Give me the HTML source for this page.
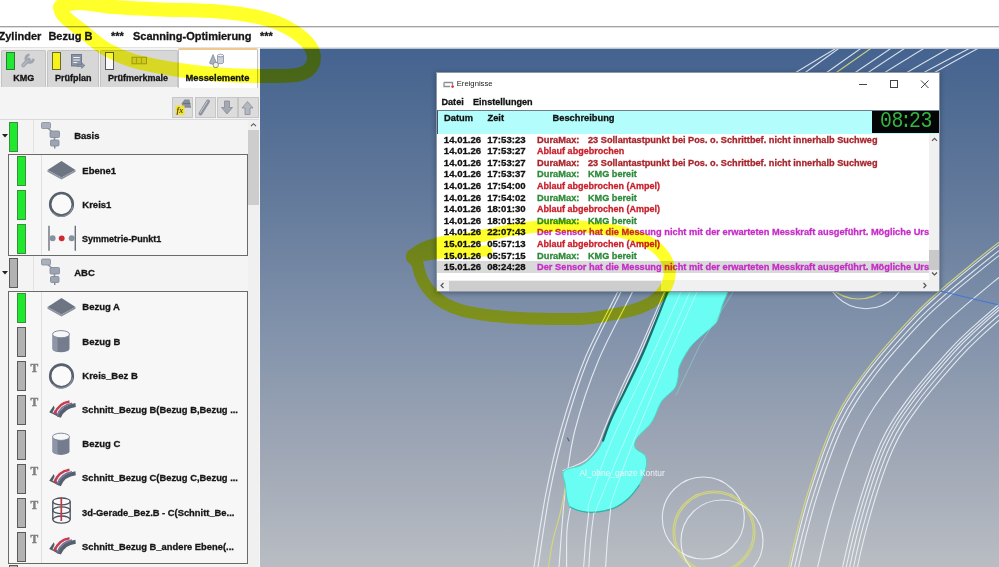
<!DOCTYPE html><html lang="de"><head><meta charset="utf-8"><title>Ereignisse</title><style>
*{box-sizing:border-box;margin:0;padding:0}
html,body{width:999px;height:567px;overflow:hidden;background:#fff}
body{position:relative;font-family:"Liberation Sans",sans-serif;color:#111}
.abs{position:absolute}
.t,.tl,.rt,.er{-webkit-text-stroke:0.3px currentColor}
.t{position:absolute;white-space:pre;font-weight:bold;line-height:1;transform-origin:0 0}
#topline{left:0;top:26px;width:999px;height:2px;background:linear-gradient(#a2a2a2 0,#a2a2a2 50%,#dedede 50%,#dedede 100%)}
#topline2{left:0;top:47px;width:999px;height:1px;background:#e3e3e3}
#panel{left:0;top:48px;width:260px;height:519px;background:#f4f4f4}
.tab{position:absolute;top:2px;height:37px;background:#d7d7d7;border:1px solid #c4c4c4;border-bottom:none;border-radius:2px 2px 0 0}
.tab.act{background:#fff;border-top:2px solid #f2c98c;top:0;height:40px}
.ind{position:absolute;width:9px;height:18px;border:1px solid #555}
.tl{position:absolute;font-weight:bold;font-size:9px;line-height:1;white-space:pre;color:#151515}
.btn{position:absolute;top:49px;height:21px;background:#dcdcdc;border:1px solid #c6c6c6}
#vp{left:260px;top:49px;width:739px;height:518px;border-top:0 solid #000;background:linear-gradient(rgb(68,99,143) 0%,rgb(97,120,154) 27%,rgb(128,145,170) 53%,rgb(160,168,182) 79%,rgb(185,189,195) 100%);overflow:hidden}
.bar{position:absolute;width:9px;height:30px;border:1px solid #4a4a4a}
.g{background:#1fe82f;border-color:#3b8f3b}
.gr{background:#b2b2b2;border-color:#5a5a5a}
.box{position:absolute;left:8px;width:240px;border:1px solid #6a6a6a;background:#f7f7f7}
.rt{position:absolute;font-weight:bold;font-size:9.5px;line-height:1;white-space:pre;color:#161616}
.tm{position:absolute;font-family:"Liberation Serif",serif;font-weight:bold;font-size:11.5px;line-height:1;color:#808080;-webkit-text-stroke:0.5px #808080}
#win{left:436px;top:72px;width:504px;height:220px;background:#fff;border:1px solid #8d98a8;overflow:hidden;box-shadow:0 1px 5px rgba(20,30,50,.45)}
.er{position:absolute;left:0;height:11.6px;width:492px;white-space:pre;font-weight:bold;font-size:9.6px;line-height:11.6px}
.er span{position:absolute;top:0;transform-origin:0 0}
.red{color:#a8242c}.red2{color:#c8202c}.grn{color:#2d8a3a}.mag{color:#c62cc8}
</style></head><body>
<div class="abs" id="topline"></div><div class="abs" id="topline2"></div><div class="abs" style="left:260px;top:48px;width:739px;height:1px;background:#b9c4d6"></div>
<div class="t" style="left:-1.5px;top:31px;font-size:11px;color:#151515;">Zylinder</div>
<div class="t" style="left:48.4px;top:31px;font-size:11px;color:#151515;">Bezug B</div>
<div class="t" style="left:111px;top:31px;font-size:11px;color:#151515;">***</div>
<div class="t" style="left:133px;top:31px;font-size:11px;color:#151515;">Scanning-Optimierung</div>
<div class="t" style="left:260px;top:31px;font-size:11px;color:#151515;">***</div>
<div class="abs" id="vp"><svg class="abs" style="left:0;top:0" width="739" height="518" viewBox="260 49 739 518" fill="none" stroke-linecap="round"><path d="M840.0 46 Q818.7 58.5 793.3 74" stroke="#eef2f8" stroke-width="1.1" stroke-opacity="0.88"/><path d="M842.2 46 Q823.3 59.5 800.4 76" stroke="#eef2f8" stroke-width="1.1" stroke-opacity="0.88"/><path d="M864.2 46 Q845.0 59.5 821.8 76" stroke="#eef2f8" stroke-width="1.1" stroke-opacity="0.88"/><path d="M874.3 46 Q854.8 59.5 831.3 76" stroke="#d6d878" stroke-width="1.2" stroke-opacity="0.9"/><path d="M894.4 46 Q874.3 59.5 850.1 76" stroke="#eef2f8" stroke-width="1.1" stroke-opacity="0.88"/><path d="M908.3 46 Q887.6 59.5 862.9 76" stroke="#eef2f8" stroke-width="1.1" stroke-opacity="0.88"/><path d="M927.9 46 Q905.6 59.5 879.3 76" stroke="#eef2f8" stroke-width="1.1" stroke-opacity="0.88"/><path d="M953.2 46 Q929.1 59.5 901.0 76" stroke="#eef2f8" stroke-width="1.1" stroke-opacity="0.88"/><path d="M974.1 46 Q947.8 59.5 917.5 76" stroke="#eef2f8" stroke-width="1.1" stroke-opacity="0.88"/><path d="M982.4 46 Q957.4 59.5 928.4 76" stroke="#eef2f8" stroke-width="1.1" stroke-opacity="0.88"/><path d="M784.0 600.0C784.8 594.5 784.8 584.8 788.7 567.0C792.6 549.2 799.9 518.0 807.6 493.5C815.3 469.0 824.7 440.9 834.8 420.0C844.9 399.1 855.0 385.3 868.0 368.0C881.0 350.7 900.3 329.6 912.7 316.4C925.1 303.2 931.8 297.9 942.3 288.6C952.8 279.3 965.6 269.1 975.7 260.8C985.8 252.5 998.5 242.6 1003.0 239.0" stroke="#d6d878" stroke-width="1.2" stroke-opacity="0.9"/><path d="M786.0 600.3C786.8 594.8 786.7 585.1 790.7 567.4C794.6 549.7 801.9 518.5 809.5 494.1C817.2 469.7 826.6 441.7 836.6 420.9C846.7 400.1 856.7 386.4 869.6 369.2C882.6 352.1 901.9 331.0 914.2 317.8C926.5 304.6 933.2 299.4 943.7 290.2C954.1 280.9 966.9 270.7 977.0 262.4C987.1 254.2 999.8 244.3 1004.3 240.6" stroke="#eef2f8" stroke-width="1.1" stroke-opacity="0.88"/><path d="M789.6 600.8C790.4 595.4 790.4 585.8 794.4 568.3C798.3 550.7 805.6 519.6 813.3 495.3C820.9 471.0 830.3 443.2 840.3 422.6C850.2 402.0 860.1 388.7 873.0 371.7C885.8 354.7 905.0 333.8 917.3 320.7C929.6 307.7 936.1 302.6 946.6 293.4C957.0 284.3 969.8 274.1 979.9 265.9C990.0 257.7 1002.6 247.8 1007.2 244.2" stroke="#eef2f8" stroke-width="1.1" stroke-opacity="0.88"/><path d="M793.4 601.3C794.2 596.0 794.2 586.6 798.1 569.1C802.0 551.6 809.3 520.6 816.9 496.4C824.5 472.3 833.9 444.7 843.7 424.3C853.6 403.9 863.3 390.9 876.0 374.0C888.8 357.2 908.0 336.3 920.1 323.4C932.3 310.4 938.8 305.4 949.1 296.3C959.5 287.3 972.2 277.1 982.3 268.9C992.4 260.7 1005.1 250.9 1009.6 247.3" stroke="#eef2f8" stroke-width="1.1" stroke-opacity="0.88"/><path d="M812.1 604.0C812.8 598.9 812.6 590.1 816.3 573.1C820.1 556.1 827.2 525.4 834.5 501.9C841.8 478.4 850.8 451.7 860.1 432.2C869.4 412.7 878.2 400.9 890.4 384.8C902.5 368.7 921.4 348.0 933.1 335.5C944.8 322.9 950.7 318.3 960.7 309.4C970.7 300.6 983.3 290.4 993.2 282.2C1003.1 274.1 1015.7 264.2 1020.2 260.6" stroke="#eef2f8" stroke-width="1.1" stroke-opacity="0.88"/><path d="M837.0 607.5C837.5 602.7 836.8 594.8 840.2 578.4C843.6 562.0 850.4 531.8 857.2 509.1C864.0 486.4 872.4 460.7 880.9 442.2C889.5 423.8 897.0 413.6 908.3 398.3C919.7 383.0 937.9 362.5 949.0 350.3C960.0 338.2 965.1 334.0 974.7 325.3C984.2 316.6 996.5 306.3 1006.2 298.1C1015.8 289.9 1028.2 279.7 1032.6 276.0" stroke="#eef2f8" stroke-width="1.1" stroke-opacity="0.88"/><path d="M840.7 608.1C841.2 603.3 840.4 595.5 843.7 579.2C847.0 562.8 853.7 532.7 860.4 510.1C867.1 487.5 875.4 461.9 883.8 443.6C892.2 425.3 899.5 415.3 910.7 400.1C921.9 384.9 940.0 364.4 951.0 352.2C961.9 340.1 966.9 335.9 976.3 327.2C985.8 318.5 998.0 308.1 1007.6 299.9C1017.2 291.6 1029.5 281.4 1033.9 277.7" stroke="#eef2f8" stroke-width="1.1" stroke-opacity="0.88"/><path d="M844.4 608.6C844.8 603.8 843.9 596.2 847.1 579.9C850.3 563.7 856.9 533.5 863.5 511.0C870.1 488.5 878.3 463.1 886.5 444.9C894.7 426.7 901.8 416.9 912.9 401.7C923.9 386.6 942.0 366.1 952.8 353.9C963.6 341.8 968.5 337.6 977.8 328.9C987.2 320.1 999.4 309.8 1008.9 301.5C1018.5 293.2 1030.7 282.8 1035.0 279.1" stroke="#eef2f8" stroke-width="1.1" stroke-opacity="0.88"/><path d="M848.2 609.1C848.6 604.4 847.6 596.9 850.8 580.8C853.9 564.6 860.6 534.5 867.1 512.2C873.6 489.8 881.7 464.5 889.9 446.5C898.0 428.5 904.9 419.0 915.9 404.0C926.8 389.0 944.8 368.5 955.5 356.5C966.3 344.4 971.0 340.4 980.3 331.7C989.6 323.0 1001.8 312.6 1011.3 304.3C1020.8 296.1 1033.0 285.7 1037.3 282.0" stroke="#eef2f8" stroke-width="1.1" stroke-opacity="0.88"/><path d="M851.9 609.7C852.3 605.0 851.4 597.6 854.5 581.6C857.6 565.5 864.3 535.5 870.8 513.3C877.2 491.1 885.3 466.0 893.4 448.2C901.4 430.4 908.2 421.2 919.0 406.3C929.8 391.5 947.8 371.1 958.4 359.2C969.1 347.2 973.7 343.3 982.9 334.6C992.2 326.0 1004.3 315.7 1013.8 307.4C1023.3 299.2 1035.5 288.8 1039.8 285.1" stroke="#eef2f8" stroke-width="1.1" stroke-opacity="0.88"/><path d="M941 291.3L1000 305.2" stroke="#3f78d8" stroke-width="1.1"/><circle cx="866" cy="267.6" r="41.2" stroke="#eef2f8" stroke-width="1.1" stroke-opacity="0.88"/><circle cx="858.5" cy="259" r="40" stroke="#d6d878" stroke-width="1.2" stroke-opacity="0.9"/><circle cx="703.3" cy="518" r="41" stroke="#eef2f8" stroke-width="1.1" stroke-opacity="0.88"/><circle cx="714" cy="532" r="41" stroke="#d6d878" stroke-width="1.2" stroke-opacity="0.9"/><circle cx="714" cy="532" r="39.3" stroke="#d6d878" stroke-width="1.2" stroke-opacity="0.9"/><circle cx="722" cy="541" r="41" stroke="#eef2f8" stroke-width="1.1" stroke-opacity="0.88"/><path d="M622.0 280.0C621.3 282.0 623.8 278.8 617.6 292.0C611.4 305.2 594.2 336.0 584.7 359.0C575.2 382.0 567.2 407.7 560.8 430.0C554.3 452.3 550.5 470.2 546.0 493.0C541.5 515.8 536.2 553.3 534.0 567.0C531.8 580.7 533.2 573.7 533.0 575.0" stroke="#eef2f8" stroke-width="1.1" stroke-opacity="0.88"/><path d="M625.0 280.0C624.3 282.0 626.9 278.8 620.8 292.0C614.7 305.2 597.6 336.0 588.2 359.0C578.8 382.0 570.9 407.7 564.5 430.0C558.1 452.3 554.1 470.2 549.7 493.0C545.3 515.8 540.1 553.3 538.0 567.0C535.9 580.7 537.2 573.7 537.0 575.0" stroke="#eef2f8" stroke-width="1.1" stroke-opacity="0.88"/><path d="M636.5 280.0C635.8 282.0 638.6 278.8 632.4 292.0C626.1 305.2 608.6 336.0 599.0 359.0C589.4 382.0 580.7 407.7 575.0 430.0C569.3 452.3 567.7 470.2 565.0 493.0C562.3 515.8 560.1 553.3 559.0 567.0C557.9 580.7 558.6 573.7 558.5 575.0" stroke="#eef2f8" stroke-width="1.1" stroke-opacity="0.88"/><path d="M670.0 280.0C669.1 282.0 669.8 280.0 664.5 292.0C659.2 304.0 645.8 335.8 638.5 352.0C631.2 368.2 626.8 376.0 621.0 389.0C615.2 402.0 608.0 420.3 604.0 430.0C600.0 439.7 600.0 442.0 597.0 447.0C594.0 452.0 590.2 456.7 586.0 460.0C581.8 463.3 575.8 465.2 572.0 467.0C568.2 468.8 564.5 469.9 563.0 470.5" stroke="#eef2f8" stroke-width="1.1" stroke-opacity="0.88"/><path d="M673.0 280.0C672.0 282.0 672.3 280.0 667.0 292.0C661.7 304.0 648.2 335.8 641.0 352.0C633.8 368.2 629.6 376.0 624.0 389.0C618.4 402.0 611.5 420.2 607.5 430.0C603.5 439.8 603.2 442.7 600.0 448.0C596.8 453.3 592.5 458.4 588.0 462.0C583.5 465.6 577.2 467.7 573.0 469.5C568.8 471.3 564.7 472.4 563.0 473.0" stroke="#eef2f8" stroke-width="1.1" stroke-opacity="0.88"/><path d="M563.5 472.0C563.9 473.3 566.4 473.7 566.0 480.0C565.6 486.3 563.2 500.0 561.0 510.0C558.8 520.0 555.1 530.5 553.0 540.0C550.9 549.5 549.3 561.2 548.5 567.0C547.7 572.8 548.1 573.7 548.0 575.0" stroke="#d6d878" stroke-width="1.2" stroke-opacity="0.9"/><path d="M571.0 505.0C570.3 509.2 567.7 519.7 567.0 530.0C566.3 540.3 566.7 559.5 566.6 567.0C566.5 574.5 566.5 573.7 566.5 575.0" stroke="#eef2f8" stroke-width="1.1" stroke-opacity="0.88"/><path d="M668.0 288.0C666.7 291.7 664.1 299.4 660.0 310.0C655.9 320.6 649.2 338.7 643.5 351.8C637.8 364.9 631.5 377.4 626.0 388.8C620.5 400.2 614.5 411.4 610.7 420.0C606.9 428.6 605.6 435.1 603.0 440.7C600.4 446.3 598.5 449.6 595.0 453.7C591.5 457.8 587.2 462.1 582.0 465.0C576.8 467.9 566.8 467.7 564.0 471.0C561.2 474.3 564.6 479.5 565.3 484.8C566.0 490.1 566.5 498.9 568.0 503.0C569.5 507.1 570.3 507.9 574.4 509.4C578.5 510.9 586.1 512.2 592.6 512.0C599.1 511.8 607.3 510.4 613.3 508.0C619.3 505.6 624.5 501.6 628.8 497.7C633.1 493.8 636.4 489.6 639.2 484.8C642.0 480.0 644.7 473.8 645.7 469.0C646.8 464.2 647.2 459.5 645.5 456.0C643.8 452.5 636.7 451.0 635.3 448.0C633.9 445.0 634.6 441.8 637.0 438.0C639.4 434.2 646.6 428.7 649.6 425.0C652.6 421.3 653.0 420.0 655.0 416.0C657.0 412.0 658.6 405.6 661.9 401.0C665.1 396.4 671.8 392.5 674.5 388.7C677.2 384.9 677.1 381.8 678.0 378.0C678.9 374.2 677.6 371.0 679.6 366.0C681.6 361.0 686.0 353.1 689.7 348.0C693.4 342.9 698.3 339.1 702.0 335.6C705.7 332.1 709.4 329.5 712.0 327.0C714.6 324.5 715.8 324.2 717.5 320.5C719.2 316.8 720.8 309.6 722.5 305.0C724.2 300.4 726.5 295.8 727.6 292.6C728.7 289.4 728.8 287.1 729.0 286.0Z" fill="#6afdf3" stroke="#49d6c4" stroke-width="1"/><path d="M667.5 292.0C663.5 302.0 650.4 335.7 643.5 351.8C636.6 367.9 631.5 377.4 626.0 388.8C620.5 400.2 614.5 411.4 610.7 420.0C606.9 428.6 604.3 437.2 603.0 440.7" stroke="#0f5a5a" stroke-width="2.2" stroke-opacity="0.85"/><path d="M570.0 507.0C571.7 507.7 576.2 510.1 580.0 511.0C583.8 511.9 587.1 512.9 592.6 512.5C598.1 512.1 607.3 510.9 613.3 508.5C619.3 506.1 624.5 502.1 628.8 498.2C633.1 494.3 637.5 487.4 639.2 485.3" stroke="#2aa89c" stroke-width="1.2" stroke-opacity="0.8"/><path d="M690.0 292.0C685.0 303.3 670.8 335.3 660.0 360.0C649.2 384.7 635.0 416.7 625.0 440.0C615.0 463.3 605.0 487.8 600.0 500.0C595.0 512.2 595.8 510.8 595.0 513.0" stroke="#e8ffff" stroke-width="1" stroke-opacity="0.55"/><path d="M697.0 292.0C692.0 303.3 677.5 335.3 667.0 360.0C656.5 384.7 643.2 416.7 634.0 440.0C624.8 463.3 615.9 488.5 612.0 500.0C608.1 511.5 610.9 507.5 610.7 509.0" stroke="#e8ffff" stroke-width="1" stroke-opacity="0.55"/><path d="M681.0 292.0C675.8 303.3 661.5 335.3 650.0 360.0C638.5 384.7 622.0 416.7 612.0 440.0C602.0 463.3 593.9 487.8 590.0 500.0C586.1 512.2 588.9 510.8 588.7 513.0" stroke="#e8ffff" stroke-width="1" stroke-opacity="0.55"/><path d="M588.7 513Q585 540 583.5 570" stroke="#eef2f8" stroke-width="1.1" stroke-opacity="0.88"/><path d="M593.8 513Q590 540 588.7 570" stroke="#eef2f8" stroke-width="1.1" stroke-opacity="0.88"/><path d="M610.7 509Q606.5 540 605.5 570" stroke="#eef2f8" stroke-width="1.1" stroke-opacity="0.88"/><path d="M733 292L700 345L676 395" stroke="#7fded8" stroke-width="0.8" stroke-opacity="0.7"/><path d="M567.5 438l1.5 3" stroke="#3a4a7a" stroke-width="1"/></svg><div class="abs" style="left:319.5px;top:419.5px;font-size:8.4px;line-height:1;color:#f4f6fa;white-space:pre;opacity:.92">Al_ohne_ganze Kontur</div></div>
<div class="abs" id="panel">
<div class="tab" style="left:1px;width:45px"></div>
<div class="tab" style="left:47px;width:52px"></div>
<div class="tab" style="left:100px;width:78px"></div>
<div class="tab act" style="left:178px;width:80px"></div>
<div class="ind" style="left:6px;top:4px;background:#22e833;border-color:#2f7a33"></div>
<div class="ind" style="left:52px;top:4px;background:#f7f21a;border-color:#6a6a2a"></div>
<div class="ind" style="left:105px;top:4px;background:#fafafa;border-color:#5a5a5a"></div>
<div class="tl" style="left:13.3px;top:25.5px">KMG</div>
<div class="tl" style="left:55px;top:25.5px">Prüfplan</div>
<div class="tl" style="left:108px;top:25.5px">Prüfmerkmale</div>
<div class="tl" style="left:185.5px;top:25.5px;font-size:9.35px">Messelemente</div>
<svg class="abs" style="left:0;top:0" width="259" height="42" viewBox="0 48 259 42" fill="none"><g stroke="#a0a6b1" stroke-linecap="round"><path d="M23.200 65.300L28.800 59.700" stroke-width="4"/><path d="M28.300 55A3.800 3.800 0 1 0 33.200 59.900" stroke-width="2.900"/></g><path d="M22.3 66.2L28.3 60.2" stroke="#c4c9d1" stroke-width="1"/><rect x="71.500" y="54.500" width="10" height="11.500" fill="#8a93a6" stroke="#707a8e" stroke-width="1"/><path d="M73.300 57.500h6.500M73.300 60h6.500M73.300 62.500h4" stroke="#eef0f4" stroke-width="1.100"/><path d="M77 64.500h4.500v-2l3.500 3l-3.500 3v-2h-4.500z" fill="#8a92a6" stroke="#6a7386" stroke-width="0.5"/><rect x="132" y="57.200" width="14.500" height="6.600" fill="#cfc98c" stroke="#98936c" stroke-width="0.900"/><path d="M136.5 57.500v6M141.5 57.500v6" stroke="#9a956e" stroke-width="0.8"/><path d="M209.500 63l3.500-8.500l3.500 8.500a3.500 1.200 0 0 1-7 0z" fill="#a9b0bd" stroke="#7a8292" stroke-width="0.7"/><path d="M217.500 55.500v7a3 1.200 0 0 0 6 0v-7" fill="#c9ced8" stroke="#7a8292" stroke-width="0.7"/><ellipse cx="220.500" cy="55.500" rx="3" ry="1.300" fill="#f2f4f7" stroke="#7a8292" stroke-width="0.7"/><circle cx="215.800" cy="65" r="2.700" fill="#eef0f4" stroke="#7a8292" stroke-width="0.8"/></svg>
<div class="btn" style="left:172px;width:21px"></div>
<div class="btn" style="left:195px;width:21px"></div>
<div class="btn" style="left:217px;width:21px"></div>
<div class="btn" style="left:237.5px;width:21px"></div>
<svg class="abs" style="left:170px;top:48px" width="89" height="24" viewBox="170 96 89 24" fill="none"><path d="M181.500 103.500l3-4h5l1.700 8.300h-8.200z" fill="#858c9a"/><path d="M183 103.500h7.300" stroke="#6a717f" stroke-width="1"/><rect x="175.500" y="105.500" width="9" height="9.500" fill="#f0e23a"/><path d="M200.500 113.500L208 101.500" stroke="#8d939e" stroke-width="3.900" stroke-linecap="round"/><path d="M200 113L207.500 101" stroke="#c5c9d0" stroke-width="1"/><path d="M224.500 101h5v6.500h3l-5.500 6.500l-5.500-6.500h3z" fill="#a3a8b1" stroke="#868c97" stroke-width="0.8"/><path d="M245 114.500h5v-6.500h3l-5.500-6.500l-5.500 6.500h3z" fill="#b4b9c1" stroke="#868c97" stroke-width="0.8"/></svg><div class="abs" style="left:176.500px;top:58.500px;font:italic bold 8px 'Liberation Serif',serif;line-height:1;color:#5a4a10">fx</div>
<div class="abs" style="left:0;top:70.5px;width:259px;height:1px;background:#dadada"></div>
<div class="abs" style="left:248px;top:72px;width:11px;height:447px;background:#f0f0f0"></div>
<div class="abs" style="left:248px;top:82px;width:11px;height:75px;background:#cdcdcd"></div>
<svg class="abs" style="left:248px;top:72px" width="11" height="10"><path d="M3 6.200L5.500 3.700L8 6.200" fill="none" stroke="#555" stroke-width="1.050"/></svg>
<div class="abs" style="left:33px;top:72px;width:1px;height:33px;background:#e2e2e2"></div>
<div class="bar g" style="left:9px;top:73.5px"></div>
<svg class="abs" style="left:2px;top:86.0px" width="6" height="4"><path d="M0 0H6L3 3.5Z" fill="#222"/></svg>
<div class="rt" style="left:74.2px;top:83.0px">Basis</div>
<div class="box" style="top:105.5px;height:102.5px"><div class="abs" style="left:32px;top:0;width:1px;height:100%;background:#e0e0e0"></div></div>
<div class="bar g" style="left:17px;top:108.0px"></div>
<div class="rt" style="left:82.3px;top:117.5px">Ebene1</div>
<div class="bar g" style="left:17px;top:142.2px"></div>
<div class="rt" style="left:82.3px;top:151.7px">Kreis1</div>
<div class="bar g" style="left:17px;top:176.4px"></div>
<div class="rt" style="left:82.3px;top:185.9px;transform:scaleX(0.95);transform-origin:0 0">Symmetrie-Punkt1</div>
<div class="abs" style="left:33px;top:208px;width:1px;height:34px;background:#e2e2e2"></div>
<div class="bar gr" style="left:9px;top:210.0px"></div>
<svg class="abs" style="left:2px;top:222.5px" width="6" height="4"><path d="M0 0H6L3 3.5Z" fill="#222"/></svg>
<div class="rt" style="left:74.2px;top:219.5px">ABC</div>
<div class="box" style="top:242.5px;height:273px"><div class="abs" style="left:32px;top:0;width:1px;height:100%;background:#e0e0e0"></div></div>
<div class="bar g" style="left:17px;top:244.8px"></div>
<div class="rt" style="left:82.3px;top:254.3px">Bezug A</div>
<div class="bar gr" style="left:17px;top:279.0px"></div>
<div class="rt" style="left:82.3px;top:288.5px">Bezug B</div>
<div class="bar gr" style="left:17px;top:313.2px"></div>
<div class="rt" style="left:82.3px;top:322.7px">Kreis_Bez B</div>
<div class="tm" style="left:30.5px;top:315.2px">T</div>
<div class="bar gr" style="left:17px;top:347.4px"></div>
<div class="rt" style="left:82.3px;top:356.9px;transform:scaleX(0.985);transform-origin:0 0">Schnitt_Bezug B(Bezug B,Bezug ...</div>
<div class="tm" style="left:30.5px;top:349.4px">T</div>
<div class="bar gr" style="left:17px;top:381.6px"></div>
<div class="rt" style="left:82.3px;top:391.1px">Bezug C</div>
<div class="bar gr" style="left:17px;top:415.8px"></div>
<div class="rt" style="left:82.3px;top:425.3px;transform:scaleX(0.985);transform-origin:0 0">Schnitt_Bezug C(Bezug C,Bezug ...</div>
<div class="tm" style="left:30.5px;top:417.8px">T</div>
<div class="bar gr" style="left:17px;top:450.0px"></div>
<div class="rt" style="left:82.3px;top:459.5px;transform:scaleX(0.985);transform-origin:0 0">3d-Gerade_Bez.B - C(Schnitt_Be...</div>
<div class="tm" style="left:30.5px;top:452.0px">T</div>
<div class="bar gr" style="left:17px;top:484.2px"></div>
<div class="rt" style="left:82.3px;top:493.7px;transform:scaleX(0.985);transform-origin:0 0">Schnitt_Bezug B_andere Ebene(...</div>
<div class="tm" style="left:30.5px;top:486.2px">T</div>
<div class="bar gr" style="left:9px;top:517.0px"></div>
<svg class="abs" style="left:0;top:72px" width="248" height="447" viewBox="0 120 248 447" fill="none"><g transform="translate(41 122)"><path d="M5 4.500L13 11.500M13.500 13v9" stroke="#8d94a2" stroke-width="1.600"/><rect x="0.500" y="0.500" width="9" height="6" rx="1" fill="#aab0bc" stroke="#858c9a" stroke-width="0.800"/><rect x="9" y="9" width="9.500" height="6.500" rx="1" fill="#9ea5b2" stroke="#7f8694" stroke-width="0.800"/><rect x="9.500" y="18" width="8.500" height="6" rx="1" fill="#9ea5b2" stroke="#7f8694" stroke-width="0.800"/><path d="M13.700 24v2.500" stroke="#7f8694" stroke-width="1.400"/></g><g transform="translate(41 258.5)"><path d="M5 4.500L13 11.500M13.500 13v9" stroke="#8d94a2" stroke-width="1.600"/><rect x="0.500" y="0.500" width="9" height="6" rx="1" fill="#aab0bc" stroke="#858c9a" stroke-width="0.800"/><rect x="9" y="9" width="9.500" height="6.500" rx="1" fill="#9ea5b2" stroke="#7f8694" stroke-width="0.800"/><rect x="9.500" y="18" width="8.500" height="6" rx="1" fill="#9ea5b2" stroke="#7f8694" stroke-width="0.800"/><path d="M13.700 24v2.500" stroke="#7f8694" stroke-width="1.400"/></g><g transform="translate(0 169.5)"><path d="M47.500 0.500L61.500 -8.500L75.500 0.500L61.500 8z" fill="#6d7482"/><path d="M47.500 0.500L61.500 8L75.500 0.500V2.300L61.500 10L47.500 2.300z" fill="#8b92a0"/></g><circle cx="61.500" cy="204.3" r="11.300" stroke="#59606d" stroke-width="2.600" fill="#fafafa"/><path d="M53 212.8A11.300 11.300 0 0 0 72.500 206.3" stroke="#8a919e" stroke-width="1.200"/><g transform="translate(0 238.3)"><path d="M49 -12.500v25M75.300 -12.500v25" stroke="#6a717e" stroke-width="1.400"/><circle cx="52.600" cy="0" r="3" fill="#8a919e"/><circle cx="71.700" cy="0" r="3" fill="#8a919e"/><circle cx="61.700" cy="0" r="2.900" fill="#cf2a32"/></g><g transform="translate(0 306.5)"><path d="M47.500 0.500L61.500 -8.500L75.500 0.500L61.500 8z" fill="#6d7482"/><path d="M47.500 0.500L61.500 8L75.500 0.500V2.300L61.500 10L47.500 2.300z" fill="#8b92a0"/></g><g transform="translate(0 341.7)"><path d="M52.500 -7v14a8.500 3.600 0 0 0 17 0v-14z" fill="#747c8e"/><path d="M52.500 -7v14a8.500 3.600 0 0 0 5 3.300v-14z" fill="#8d95a6"/><ellipse cx="61" cy="-7.500" rx="8.500" ry="3.600" fill="#f6f7f9" stroke="#7a8192" stroke-width="0.900"/></g><circle cx="61.500" cy="375.90000000000003" r="11.300" stroke="#59606d" stroke-width="2.600" fill="#fafafa"/><path d="M53 384.40000000000003A11.300 11.300 0 0 0 72.500 377.90000000000003" stroke="#8a919e" stroke-width="1.200"/><g transform="translate(0 410.1)" stroke-linecap="butt"><path d="M49.200 2.200L53.800 -4.600L55.500 0.500L58.500 7L53.500 4.200z" fill="#4f5c68"/><path d="M59 7C61.600 0.300 66.800 -4.200 75.600 -5.200" stroke="#55626d" stroke-width="4"/><path d="M57 5.700C59.500 -1.100 64.500 -5.600 72 -6.800" stroke="#7d6f9e" stroke-width="1.600"/><path d="M54.400 4C57 -3.100 62 -7.600 69.500 -8.700" stroke="#c63e4e" stroke-width="2.500"/><path d="M53 2.500C55.500 -4.500 60.500 -9.300 68 -10.300" stroke="#f6f1f2" stroke-width="1.200" stroke-opacity="0.9"/></g><g transform="translate(0 444.3)"><path d="M52.500 -7v14a8.500 3.600 0 0 0 17 0v-14z" fill="#747c8e"/><path d="M52.500 -7v14a8.500 3.600 0 0 0 5 3.300v-14z" fill="#8d95a6"/><ellipse cx="61" cy="-7.500" rx="8.500" ry="3.600" fill="#f6f7f9" stroke="#7a8192" stroke-width="0.900"/></g><g transform="translate(0 478.5)" stroke-linecap="butt"><path d="M49.200 2.200L53.800 -4.600L55.500 0.500L58.500 7L53.500 4.200z" fill="#4f5c68"/><path d="M59 7C61.600 0.300 66.800 -4.200 75.600 -5.200" stroke="#55626d" stroke-width="4"/><path d="M57 5.700C59.500 -1.100 64.500 -5.600 72 -6.800" stroke="#7d6f9e" stroke-width="1.600"/><path d="M54.400 4C57 -3.100 62 -7.600 69.500 -8.700" stroke="#c63e4e" stroke-width="2.500"/><path d="M53 2.500C55.500 -4.500 60.500 -9.300 68 -10.300" stroke="#f6f1f2" stroke-width="1.200" stroke-opacity="0.9"/></g><g transform="translate(0 512.7)" stroke="#4b515d" stroke-width="1.300" fill="none"><ellipse cx="61.500" cy="-11.300" rx="8.700" ry="3.400" fill="#fbfbfb"/><ellipse cx="61.500" cy="-2.500" rx="8.700" ry="3.400"/><ellipse cx="61.500" cy="6.900" rx="8.700" ry="3.600"/><path d="M52.800 -11.300v18.200M70.200 -11.300v18.200"/><path d="M61.300 -15.300v23.600" stroke="#c03a48" stroke-width="1.700"/></g><g transform="translate(0 546.9)" stroke-linecap="butt"><path d="M49.200 2.200L53.800 -4.600L55.500 0.500L58.500 7L53.500 4.200z" fill="#4f5c68"/><path d="M59 7C61.600 0.300 66.800 -4.200 75.600 -5.200" stroke="#55626d" stroke-width="4"/><path d="M57 5.700C59.500 -1.100 64.500 -5.600 72 -6.800" stroke="#7d6f9e" stroke-width="1.600"/><path d="M54.400 4C57 -3.100 62 -7.600 69.500 -8.700" stroke="#c63e4e" stroke-width="2.500"/><path d="M53 2.500C55.500 -4.500 60.500 -9.300 68 -10.300" stroke="#f6f1f2" stroke-width="1.200" stroke-opacity="0.9"/></g></svg>
</div>
<div class="abs" id="win">
<div class="abs" style="left:19.7px;top:6.6px;font-size:7.7px;line-height:1;color:#222;white-space:pre">Ereignisse</div>
<svg class="abs" style="left:0;top:0" width="503" height="30" fill="none"><path d="M7 9.5H15.5V12M7 9.5V13.5H13" stroke="#8a8f98" stroke-width="1.3"/><circle cx="15.6" cy="13.6" r="1.3" fill="#d83030"/><path d="M422 11.5H430" stroke="#444" stroke-width="1"/><rect x="453.5" y="7.5" width="7" height="7" stroke="#444" stroke-width="1"/><path d="M484 7.5l7.500 7.500M491.5 7.5l-7.500 7.500" stroke="#444" stroke-width="1"/></svg>
<div class="t" style="left:4.5px;top:24.5px;font-size:9.1px">Datei</div>
<div class="t" style="left:36px;top:24.5px;font-size:9.1px">Einstellungen</div>
<div class="abs" style="left:0;top:36.5px;width:502px;height:24px;background:#b4fdfd;border-top:1px solid #6d7d8d;border-left:1px solid #44505c"></div>
<div class="t" style="left:7px;top:40.5px;font-size:9.3px">Datum</div>
<div class="t" style="left:50.5px;top:40.5px;font-size:9.3px">Zeit</div>
<div class="t" style="left:115.5px;top:40.5px;font-size:9.3px">Beschreibung</div>
<div class="abs" style="left:435px;top:38px;width:67px;height:22px;background:#050505"></div>
<div class="abs" style="left:442.8px;top:38.3px;font-family:'Liberation Mono',monospace;font-size:22px;line-height:22px;color:#33b445;white-space:pre;transform:scaleX(0.9);transform-origin:0 0;letter-spacing:-0.4px">08</div>
<div class="abs" style="left:463.3px;top:38.3px;font-family:'Liberation Mono',monospace;font-size:22px;line-height:22px;color:#33b445;white-space:pre;transform:scaleX(0.9);transform-origin:0 0;letter-spacing:-0.4px">:</div>
<div class="abs" style="left:472px;top:38.3px;font-family:'Liberation Mono',monospace;font-size:22px;line-height:22px;color:#33b445;white-space:pre;transform:scaleX(0.9);transform-origin:0 0;letter-spacing:-0.4px">23</div>
<div class="er" style="top:60.5px"><span style="left:6.8px">14.01.26</span><span style="left:50.2px">17:53:23</span><span class="red" style="left:99.6px;transform:scaleX(0.97)">DuraMax:</span><span class="red" style="left:151.2px;transform:scaleX(0.958)">23 Sollantastpunkt bei Pos. o. Schrittbef. nicht innerhalb Suchweg</span></div>
<div class="er" style="top:72.1px"><span style="left:6.8px">14.01.26</span><span style="left:50.2px">17:53:27</span><span class="red2" style="left:99.6px;transform:scaleX(0.942)">Ablauf abgebrochen</span></div>
<div class="er" style="top:83.7px"><span style="left:6.8px">14.01.26</span><span style="left:50.2px">17:53:27</span><span class="red" style="left:99.6px;transform:scaleX(0.97)">DuraMax:</span><span class="red" style="left:151.2px;transform:scaleX(0.958)">23 Sollantastpunkt bei Pos. o. Schrittbef. nicht innerhalb Suchweg</span></div>
<div class="er" style="top:95.3px"><span style="left:6.8px">14.01.26</span><span style="left:50.2px">17:53:37</span><span class="grn" style="left:99.6px;transform:scaleX(0.97)">DuraMax:</span><span class="grn" style="left:151.2px;transform:scaleX(0.953)">KMG bereit</span></div>
<div class="er" style="top:106.9px"><span style="left:6.8px">14.01.26</span><span style="left:50.2px">17:54:00</span><span class="red2" style="left:99.6px;transform:scaleX(0.938)">Ablauf abgebrochen (Ampel)</span></div>
<div class="er" style="top:118.5px"><span style="left:6.8px">14.01.26</span><span style="left:50.2px">17:54:02</span><span class="grn" style="left:99.6px;transform:scaleX(0.97)">DuraMax:</span><span class="grn" style="left:151.2px;transform:scaleX(0.953)">KMG bereit</span></div>
<div class="er" style="top:130.1px"><span style="left:6.8px">14.01.26</span><span style="left:50.2px">18:01:30</span><span class="red2" style="left:99.6px;transform:scaleX(0.938)">Ablauf abgebrochen (Ampel)</span></div>
<div class="er" style="top:141.7px"><span style="left:6.8px">14.01.26</span><span style="left:50.2px">18:01:32</span><span class="grn" style="left:99.6px;transform:scaleX(0.97)">DuraMax:</span><span class="grn" style="left:151.2px;transform:scaleX(0.953)">KMG bereit</span></div>
<div class="er" style="top:153.3px"><span style="left:6.8px">14.01.26</span><span style="left:50.2px">22:07:43</span><span class="mag" style="left:99.6px;transform:scaleX(0.9665)">Der Sensor hat die Messung nicht mit der erwarteten Messkraft ausgeführt. Mögliche Urs</span></div>
<div class="er" style="top:164.9px"><span style="left:6.8px">15.01.26</span><span style="left:50.2px">05:57:13</span><span class="red2" style="left:99.6px;transform:scaleX(0.938)">Ablauf abgebrochen (Ampel)</span></div>
<div class="er" style="top:176.5px"><span style="left:6.8px">15.01.26</span><span style="left:50.2px">05:57:15</span><span class="grn" style="left:99.6px;transform:scaleX(0.97)">DuraMax:</span><span class="grn" style="left:151.2px;transform:scaleX(0.953)">KMG bereit</span></div>
<div class="er" style="top:188.1px;background:#d9d9d9"><span style="left:6.8px">15.01.26</span><span style="left:50.2px">08:24:28</span><span class="mag" style="left:99.6px;transform:scaleX(0.9665)">Der Sensor hat die Messung nicht mit der erwarteten Messkraft ausgeführt. Mögliche Urs</span></div>
<div class="abs" style="left:492px;top:60.5px;width:11px;height:146px;background:#f0f0f0"></div>
<div class="abs" style="left:492px;top:176.5px;width:11px;height:20px;background:#c9c9c9"></div>
<div class="abs" style="left:0;top:206.5px;width:503px;height:12px;background:#f0f0f0"></div>
<div class="abs" style="left:12px;top:207.5px;width:212px;height:10px;background:#cdcdcd"></div>
<svg class="abs" style="left:0;top:0" width="503" height="219"><g fill="none" stroke="#505050" stroke-width="1.100"><path d="M495 67.800l2.500-2.500l2.500 2.500"/><path d="M495 199.500l2.500 2.500l2.500-2.500"/><path d="M6.500 210l-2.500 2.500l2.500 2.500"/><path d="M486.500 210l2.500 2.500l-2.500 2.500"/></g></svg>
</div>
<svg class="abs" style="left:0;top:0;mix-blend-mode:multiply;pointer-events:none" width="999" height="567" fill="none" stroke="#ffff2a" stroke-width="12" stroke-linecap="round" stroke-linejoin="round"><path d="M60.0 7.0C60.7 8.5 60.1 11.8 64.0 16.0C67.9 20.2 76.6 26.5 83.6 32.0C90.6 37.5 97.6 44.2 106.0 49.0C114.4 53.8 122.3 57.6 134.0 61.0C145.7 64.4 162.0 67.2 176.0 69.5C190.0 71.8 204.0 73.4 218.0 74.5C232.0 75.6 246.5 76.0 260.0 76.0C273.5 76.0 290.2 76.6 299.0 74.5C307.8 72.4 311.2 68.2 313.0 63.5C314.8 58.8 314.0 51.8 310.0 46.0C306.0 40.2 297.3 33.2 289.0 28.5C280.7 23.8 271.8 20.3 260.0 17.5C248.2 14.7 234.3 12.8 218.0 11.5C201.7 10.2 179.3 10.2 162.0 9.5C144.7 8.8 127.7 8.1 114.0 7.0C100.3 5.9 88.8 3.2 80.0 3.0C71.2 2.8 64.2 5.5 61.0 6.0" stroke-width="14"/><path d="M487.0 251.0C482.5 251.2 468.3 251.6 460.0 252.0C451.7 252.4 443.3 252.8 437.0 253.5C430.7 254.2 426.2 255.2 422.0 256.0C417.8 256.8 413.7 257.7 412.0 258.0" stroke-width="11"/><path d="M412.0 257.5C412.8 258.4 415.8 260.6 417.0 263.0C418.2 265.4 418.4 268.8 419.5 272.0C420.6 275.2 421.5 278.5 423.5 282.0C425.5 285.5 428.1 289.5 431.5 293.0C434.9 296.5 438.9 300.1 444.0 303.0C449.1 305.9 455.7 308.6 462.0 310.5C468.3 312.4 474.8 313.4 482.0 314.5C489.2 315.6 497.0 316.3 505.0 317.0C513.0 317.7 517.5 318.2 530.0 318.5C542.5 318.8 568.2 319.3 580.0 319.0C591.8 318.7 592.2 318.1 601.0 316.6C609.8 315.1 624.5 312.5 633.0 310.0C641.5 307.5 646.9 305.0 652.0 301.8C657.1 298.6 660.9 294.5 663.6 291.0C666.4 287.5 667.5 284.3 668.5 281.0C669.5 277.7 670.1 275.0 669.5 271.0C668.9 267.0 668.0 261.7 664.7 257.0C661.5 252.3 657.1 247.2 650.0 243.0C642.9 238.8 633.7 234.8 622.0 232.0C610.3 229.2 592.0 227.5 580.0 226.5C568.0 225.5 560.0 225.7 550.0 226.0C540.0 226.3 530.5 227.0 520.0 228.5C509.5 230.0 497.0 233.1 487.0 235.0C477.0 236.9 468.3 238.6 460.0 240.0C451.7 241.4 443.0 242.2 437.0 243.5C431.0 244.8 428.2 246.0 424.0 248.0C419.8 250.0 414.0 254.2 412.0 255.5" stroke-width="12"/></svg>
</body></html>
